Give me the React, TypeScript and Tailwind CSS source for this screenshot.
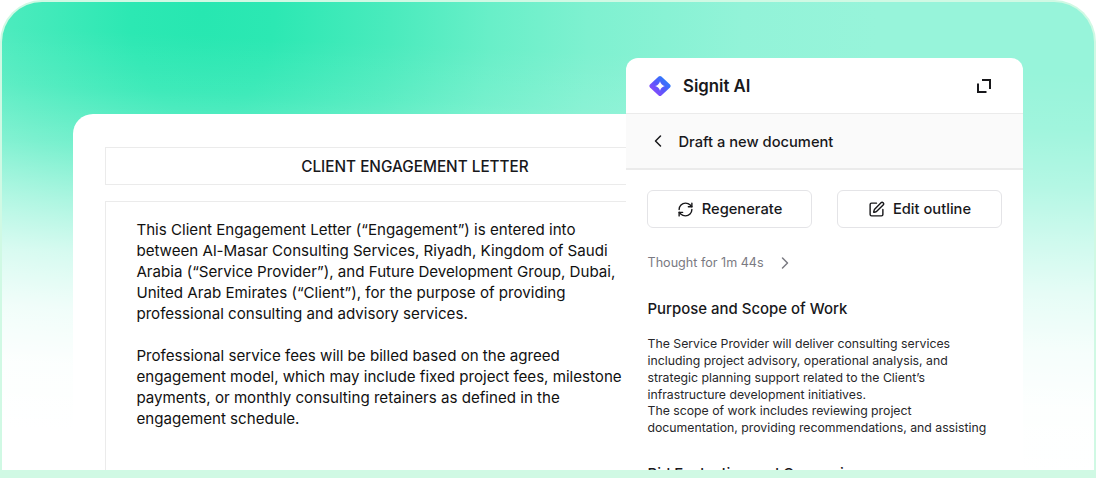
import { ChevronLeft, ChevronRight, RefreshCw, SquarePen } from "lucide-react";
import React from "react";

const letter = [
  [
    "This Client Engagement Letter (“Engagement”) is entered into",
    "between Al-Masar Consulting Services, Riyadh, Kingdom of Saudi",
    "Arabia (“Service Provider”), and Future Development Group, Dubai,",
    "United Arab Emirates (“Client”), for the purpose of providing",
    "professional consulting and advisory services.",
  ],
  [
    "Professional service fees will be billed based on the agreed",
    "engagement model, which may include fixed project fees, milestone",
    "payments, or monthly consulting retainers as defined in the",
    "engagement schedule.",
  ],
];

const scope = [
  "The Service Provider will deliver consulting services",
  "including project advisory, operational analysis, and",
  "strategic planning support related to the Client’s",
  "infrastructure development initiatives.",
  "The scope of work includes reviewing project",
  "documentation, providing recommendations, and assisting",
];

function Logo() {
  return (
    <svg width="22" height="20" viewBox="0 0 22 20" className="shrink-0">
      <defs>
        <linearGradient id="logo" x1="4" y1="17" x2="17" y2="4" gradientUnits="userSpaceOnUse">
          <stop stopColor="#8b4bfb" />
          <stop offset="0.5" stopColor="#5856fc" />
          <stop offset="1" stopColor="#2f7bfa" />
        </linearGradient>
      </defs>
      <path
        d="M9.6 0.6 Q11 -0.6 12.4 0.6 L21 8.6 Q22.3 10 21 11.4 L12.4 19.4 Q11 20.6 9.6 19.4 L1 11.4 Q-0.3 10 1 8.6 Z"
        fill="url(#logo)"
      />
      <path
        d="M11 5.2 Q12 9 15.8 10 Q12 11 11 14.8 Q10 11 6.2 10 Q10 9 11 5.2 Z"
        fill="#fff"
      />
    </svg>
  );
}

function ExpandIcon() {
  return (
    <svg width="14" height="14" viewBox="0 0 14 14" fill="none" stroke="#18181b" strokeWidth="2">
      <path d="M5 1H13V10M1 4.5V13H9.5" />
    </svg>
  );
}

function OutlineButton({ children }: { children: React.ReactNode }) {
  return (
    <button className="flex h-[38px] w-[165px] items-center justify-center gap-2 rounded-md border border-[#e4e4e7] bg-white text-[14.7px] leading-5 font-medium whitespace-nowrap">
      {children}
    </button>
  );
}

function LetterDocument() {
  return (
    <div className="mt-[112px] ml-[71px] h-[356px] w-[553px] shrink-0 overflow-hidden rounded-tl-[20px] bg-white pt-[33px] pl-8">
      <div className="flex h-[38px] w-[620px] items-center justify-center border border-[#ebebeb] pt-[3px] text-[15.3px] font-medium whitespace-nowrap">
        CLIENT ENGAGEMENT LETTER
      </div>
      <div className="mt-4 h-[300px] w-[620px] border border-[#ebebeb] pt-[17px] pl-[30.4px] text-[15.12px] leading-[21px] text-[#111]">
        {letter.map((lines, i) => (
          <p key={i} className="mb-[21px] whitespace-nowrap">
            {lines.map((line) => (
              <span key={line} className="block">
                {line}
              </span>
            ))}
          </p>
        ))}
      </div>
    </div>
  );
}

function AssistantPanel() {
  return (
    <div className="mt-[56px] h-[412px] w-[397px] shrink-0 overflow-hidden rounded-t-xl bg-white">
      <div className="flex h-[55px] items-center pt-px pr-[32px] pl-[23px]">
        <Logo />
        <span className="ml-3 flex-1 pt-px text-[16.8px] font-semibold">Signit AI</span>
        <ExpandIcon />
      </div>
      <div className="flex h-[57px] items-center border-t border-b-2 border-[#ebebeb] bg-[#fafafa] pl-[22px]">
        <ChevronLeft size={20} strokeWidth={1.8} />
        <span className="ml-[10.5px] pt-[2px] text-[14.7px] font-medium">Draft a new document</span>
      </div>
      <div className="pl-[21px] whitespace-nowrap">
        <div className="flex gap-[25px] pt-5">
          <OutlineButton>
            <RefreshCw size={17} strokeWidth={2} />
            Regenerate
          </OutlineButton>
          <OutlineButton>
            <SquarePen size={17} strokeWidth={2} />
            Edit outline
          </OutlineButton>
        </div>
        <div className="mt-[25px] flex h-5 items-center pl-[0.5px] text-[12.6px] text-[#7a7a82]">
          <span className="pt-px">Thought for 1m 44s</span>
          <ChevronRight size={20} strokeWidth={1.8} className="ml-[11px]" />
        </div>
        <h2 className="mt-[26px] pl-[0.5px] text-[14.95px] leading-5 font-medium">
          Purpose and Scope of Work
        </h2>
        <p className="mt-[17.4px] pl-[0.5px] text-[12.28px] leading-[16.7px] text-[#27272a]">
          {scope.map((line) => (
            <span key={line} className="block">
              {line}
            </span>
          ))}
        </p>
        <h2 className="mt-[27.4px] pl-[0.5px] text-[14.95px] leading-5 font-medium">
          Bid Evaluation and Comparison
        </h2>
      </div>
    </div>
  );
}

export default function App() {
  return (
    <div className="h-[478px] w-[1096px] bg-white font-['Inter',sans-serif] text-[#18181b]">
      <div className="h-full rounded-t-[42px] bg-[#d0f9e4] px-[2px] pt-[2px] pb-2">
        <div className="flex h-[468px] overflow-hidden rounded-t-[40px] bg-[linear-gradient(182.5deg,rgba(255,255,255,0)_14%,rgba(255,255,255,0.09)_25%,rgba(255,255,255,0.28)_36%,rgba(255,255,255,0.54)_47%,rgba(255,255,255,0.76)_57%,rgba(255,255,255,0.91)_68%,rgba(255,255,255,0.98)_79%,#fff_92%),radial-gradient(ellipse_900px_1300px_at_200px_10px,#27e7b1_0%,#2ce8b3_8%,#4aebbd_21%,#68efc8_32%,#7ef1d0_43%,#92f3d8_60%,#97f4da_75%)]">
          <LetterDocument />
          <AssistantPanel />
        </div>
      </div>
    </div>
  );
}
